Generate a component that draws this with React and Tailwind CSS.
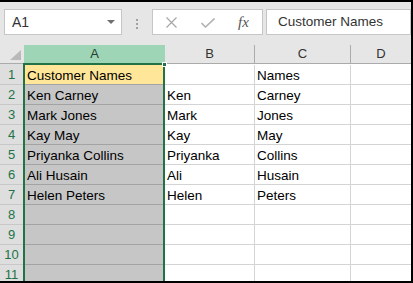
import React from "react";

const rows = [
    ["Customer Names", "", "Names"],
    ["Ken Carney", "Ken", "Carney"],
    ["Mark Jones", "Mark", "Jones"],
    ["Kay May", "Kay", "May"],
    ["Priyanka Collins", "Priyanka", "Collins"],
    ["Ali Husain", "Ali", "Husain"],
    ["Helen Peters", "Helen", "Peters"],
    ["", "", ""],
    ["", "", ""],
    ["", "", ""],
    ["", "", ""],
];

function FormulaBar() {
    return (
        <div className="h-[43px] shrink-0 flex items-start pt-[7px]">
            {/* name box */}
            <div className="ml-[4px] w-[118px] h-[26px] border border-[#c6c6c6] bg-white flex items-center justify-between pl-[7px] pr-[6px]">
                <span className="text-[14px] text-[#333]">A1</span>
                <svg width="8" height="4" viewBox="0 0 8 4">
                    <path d="M0 0 L8 0 L4 4 Z" fill="#6f6f6f" />
                </svg>
            </div>
            <div className="w-[30px] flex justify-center">
                <div className="flex flex-col gap-[2px] mt-[10px]">
                    <div className="w-[2px] h-[2px] bg-[#a0a0a0]" />
                    <div className="w-[2px] h-[2px] bg-[#a0a0a0]" />
                    <div className="w-[2px] h-[2px] bg-[#a0a0a0]" />
                </div>
            </div>
            {/* cancel / enter / fx */}
            <div className="w-[111px] h-[26px] border border-[#c6c6c6] bg-white flex items-center pl-[13px]">
                <svg width="11" height="11" viewBox="0 0 11 11">
                    <path d="M0.5 0.5 L10.5 10.5 M10.5 0.5 L0.5 10.5" stroke="#a6a6a6" strokeWidth="1.2" fill="none" />
                </svg>
                <svg className="ml-[24px] mt-[2px]" width="14" height="10" viewBox="0 0 14 10">
                    <path d="M0.5 5 L4.5 9 L13.5 0.5" stroke="#b4b4b4" strokeWidth="1.6" fill="none" />
                </svg>
                <span className="ml-[23px] font-['Liberation_Serif',serif] italic text-[15px] text-[#555] leading-none">fx</span>
            </div>
            {/* formula input */}
            <div className="flex-1 ml-[3px] h-[26px] border border-[#c6c6c6] bg-white flex items-center pl-[11px]">
                <span className="text-[13.5px] text-[#333]">Customer Names</span>
            </div>
        </div>
    );
}

function HeaderRow() {
    return (
        <div className="relative flex h-[19px] shrink-0 text-[13px]">
            <div className="w-[23px] border-b border-[#ababab] flex items-start justify-end pr-[2px] pt-[5px]">
                <svg width="11" height="10" viewBox="0 0 11 10">
                    <path d="M11 0 L11 10 L0 10 Z" fill="#b9b9b9" />
                </svg>
            </div>
            <div className="w-[142px] pl-[1px] border-b border-[#217346]">
                <div className="h-full bg-[#9fd5b7] flex items-center justify-center text-[#1f3f30]">A</div>
            </div>
            <div className="w-[90px] border-b border-r border-[#ababab] flex items-center justify-center text-[#333]">B</div>
            <div className="w-[96px] border-b border-r border-[#ababab] flex items-center justify-center text-[#333]">C</div>
            <div className="flex-1 border-b border-[#ababab] flex items-center justify-center text-[#333]">D</div>
            {/* fill handle */}
            <div className="absolute left-[162px] top-[17px] w-[5px] h-[5px] bg-[#217346] border border-white z-10" />
        </div>
    );
}

function Row({ n, cells }) {
    const [a, b, c] = cells;
    return (
        <div className="flex h-[20px] shrink-0 text-[13.5px] leading-[15px] text-black">
            <div className="w-[23px] bg-[#dedede] border-b border-[#c8c8c8] flex items-center justify-center text-[13px] text-[#217346]">
                {n}
            </div>
            <div className="w-[142px] border-x-2 border-[#217346]">
                <div className={`h-full border-b border-[#a3a3a3] flex items-end pb-[1px] pl-[2px] ${n === 1 ? "bg-[#ffe699]" : "bg-[#c6c6c6]"}`}>
                    {a}
                </div>
            </div>
            <div className="w-[90px] bg-white border-b border-r border-[#d4d4d4] flex items-end pb-[1px] pl-[2px]">{b}</div>
            <div className="w-[96px] bg-white border-b border-r border-[#d4d4d4] flex items-end pb-[1px] pl-[2px]">{c}</div>
            <div className="flex-1 bg-white border-b border-[#d4d4d4]" />
        </div>
    );
}

export default function App() {
    return (
        <div className="w-[413px] h-[283px] overflow-hidden border-t-2 border-r-2 border-b-2 border-black bg-[#e6e6e6] flex flex-col font-['Liberation_Sans',Arial,sans-serif]">
            <FormulaBar />
            <HeaderRow />
            <div className="flex h-[1px] shrink-0">
                <div className="w-[23px] bg-[#dedede]" />
                <div className="w-[142px] bg-[#217346]" />
                <div className="flex-1 bg-white" />
            </div>
            <div className="flex-1 overflow-hidden flex flex-col">
                {rows.map((r, i) => (
                    <Row key={i} n={i + 1} cells={r} />
                ))}
            </div>
        </div>
    );
}
